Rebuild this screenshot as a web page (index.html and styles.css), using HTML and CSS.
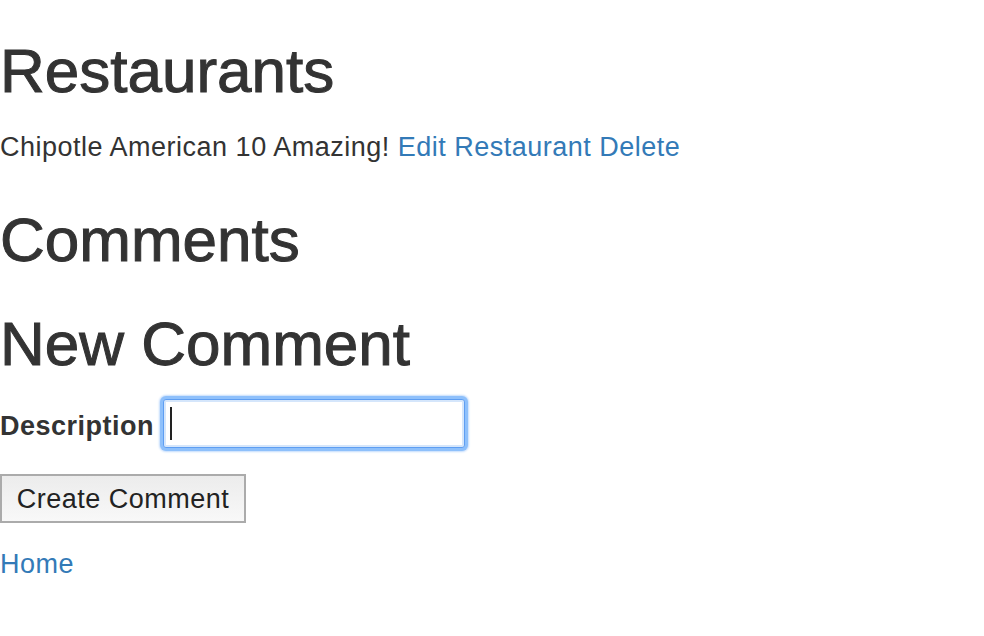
FILE: index.html
```html
<!DOCTYPE html>
<html>
<head>
<meta charset="utf-8">
<link rel="stylesheet" href="styles.css">
</head>
<body>
<h1 class="title title-main">Restaurants</h1>
<p class="info">Chipotle American 10 Amazing! <a href="#">Edit Restaurant</a> <a href="#">Delete</a></p>
<h1 class="title title-comments">Comments</h1>
<h1 class="title title-new">New Comment</h1>
<form class="form">
  <div class="field">
    <label class="label" for="d">Description</label>
    <span class="input-wrap"><input class="input" id="d" type="text"><span class="caret"></span></span>
  </div>
  <div class="actions">
    <button class="btn" type="button">Create Comment</button>
  </div>
</form>
<a class="home" href="#">Home</a>
</body>
</html>
```
FILE: styles.css
```css
html, body {
  margin: 0;
  padding: 0;
  background: #fff;
}
body {
  font-family: "Liberation Sans", Arial, Helvetica, sans-serif;
  font-size: 27px;
  line-height: 36px;
  letter-spacing: 0.5px;
  color: #333;
}
a {
  color: #337ab7;
  text-decoration: none;
}
.title {
  font-size: 62px;
  font-weight: 400;
  line-height: 70px;
  letter-spacing: 0;
  -webkit-text-stroke: 1px #333;
  margin: 36px 0 18px;
}
.title-main {
  margin-bottom: 23px;
}
.info {
  margin: 0 0 18px;
}
.title-comments {
  margin-top: 40px;
}
.title-new {
  margin-top: 34px;
  margin-bottom: 16px;
}
.form {
  margin: 0;
}
.field {
  display: flex;
  align-items: center;
  gap: 9px;
  height: 56px;
}
.label {
  font-weight: 700;
  letter-spacing: 0.5px;
  margin-top: 5px;
}
.input-wrap {
  position: relative;
  display: inline-block;
}
.input {
  box-sizing: border-box;
  width: 302px;
  height: 49px;
  border: 1px solid #5e9ef2;
  border-radius: 3px;
  box-shadow: inset 0 0 0 2px #d5e6fb, 0 0 0 3px #8ec0fb, 0 0 2px 4px #c3dcfc;
  outline: none;
  font: inherit;
  padding: 0 6px;
  background: #fff;
}
.caret {
  position: absolute;
  left: 7px;
  top: 8px;
  width: 2px;
  height: 33px;
  background: #222;
}
.actions {
  margin-top: 23px;
}
.btn {
  box-sizing: border-box;
  height: 49px;
  width: 246px;
  border: 2px solid #ababab;
  background: linear-gradient(#ececec, #f8f8f8);
  font: inherit;
  letter-spacing: 0.5px;
  color: #222;
  padding: 0 14px;
  border-radius: 0;
}
.home {
  display: inline-block;
  margin-top: 23px;
}
```
